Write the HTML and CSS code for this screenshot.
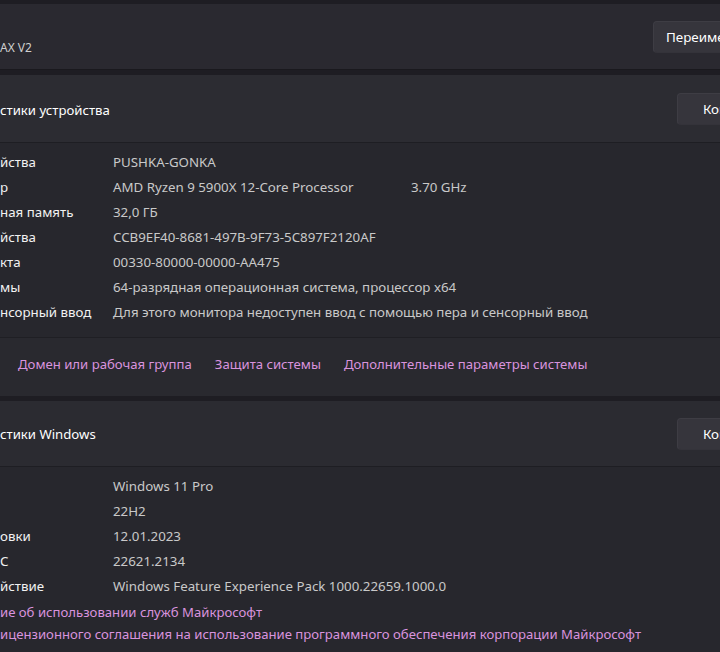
FILE: index.html
```html
<!DOCTYPE html>
<html lang="ru">
<head>
<meta charset="utf-8">
<title>О системе</title>
<link rel="stylesheet" href="styles.css">
</head>
<body>
<div class="page">
  <section class="card name-card">
    <div class="name-text">
      <div class="name-sub">AX V2</div>
    </div>
    <button class="btn btn-rename">Переименовать</button>
  </section>

  <section class="expander">
    <div class="exp-header">
      <span class="exp-title">стики устройства</span>
      <button class="btn btn-copy">Копировать</button>
    </div>
    <div class="exp-body">
      <dl class="specs">
        <dt>йства</dt><dd>PUSHKA-GONKA</dd>
        <dt class="cut">р</dt><dd><span class="cpu">AMD Ryzen 9 5900X 12-Core Processor</span>3.70 GHz</dd>
        <dt>ная память</dt><dd>32,0 ГБ</dd>
        <dt>йства</dt><dd>CCB9EF40-8681-497B-9F73-5C897F2120AF</dd>
        <dt>кта</dt><dd>00330-80000-00000-AA475</dd>
        <dt>мы</dt><dd>64-разрядная операционная система, процессор x64</dd>
        <dt>нсорный ввод</dt><dd>Для этого монитора недоступен ввод с помощью пера и сенсорный ввод</dd>
      </dl>
    </div>
    <div class="related">
      <a class="link" href="#">Домен или рабочая группа</a>
      <a class="link" href="#">Защита системы</a>
      <a class="link" href="#">Дополнительные параметры системы</a>
    </div>
  </section>

  <section class="expander">
    <div class="exp-header exp-header-win">
      <span class="exp-title exp-title-win">стики Windows</span>
      <button class="btn btn-copy">Копировать</button>
    </div>
    <div class="exp-body exp-body-win">
      <dl class="specs">
        <dt></dt><dd>Windows 11 Pro</dd>
        <dt></dt><dd>22H2</dd>
        <dt>овки</dt><dd>12.01.2023</dd>
        <dt>С</dt><dd>22621.2134</dd>
        <dt>йствие</dt><dd>Windows Feature Experience Pack 1000.22659.1000.0</dd>
      </dl>
      <div class="legal">
        <a class="link" href="#">ие об использовании служб Майкрософт</a>
        <a class="link" href="#">ицензионного соглашения на использование программного обеспечения корпорации Майкрософт</a>
      </div>
    </div>
  </section>
</div>
</body>
</html>
```

FILE: styles.css
```css
html, body {
  margin: 0;
  padding: 0;
  background: #1e1d23;
  overflow: hidden;
  height: 652px;
}

body {
  font-family: "Noto Sans", "Open Sans", sans-serif;
  font-size: 13.3px;
  color: #d0d0d0;
}

.page {
  width: 800px;
  padding-top: 4px;
  display: flex;
  flex-direction: column;
  gap: 5px;
}

.card {
  background: #2a2930;
  border-bottom: 1px solid #1a191e;
}

.name-card {
  height: 65px;
  display: flex;
  align-items: center;
  justify-content: space-between;
  padding-right: 16px;
}

.name-text {
  align-self: flex-start;
  padding-top: 36px;
}

.name-sub {
  font-size: 12px;
  line-height: 16px;
  color: #cfcfcf;
}

.btn {
  font-family: inherit;
  font-size: 13.4px;
  color: #ffffff;
  background: #36353c;
  border: 1px solid #3e3d44;
  border-bottom-color: #34333a;
  border-radius: 4px;
  height: 32px;
  padding: 0 12px;
  text-align: left;
  flex-shrink: 0;
}

.btn-rename { width: 131px; }
.btn-copy {
  width: 107px;
  padding-left: 25px;
}

.expander {
  display: flex;
  flex-direction: column;
}

.exp-header {
  height: 67px;
  background: #2c2c32;
  border-bottom: 1px solid #1e1e23;
  display: flex;
  align-items: center;
  justify-content: space-between;
  padding-right: 16px;
}

.exp-header-win {
  height: 65px;
  background: #2b2b31;
}

.exp-title {
  font-size: 13.2px;
  color: #ffffff;
  padding-top: 3px;
}

.exp-title-win {
  padding-top: 0;
}

.exp-body {
  background: #27272d;
  padding: 7px 0 12px;
  border-bottom: 1px solid #1f1f24;
}

.exp-body-win {
  border-bottom: none;
  padding-bottom: 20px;
}

.specs {
  margin: 0;
  display: grid;
  grid-template-columns: 113px 1fr;
  line-height: 25px;
}

.specs dt {
  color: #f2f2f2;
  white-space: nowrap;
  overflow: hidden;
}

.specs dd {
  margin: 0;
  color: #c9c9c9;
  white-space: nowrap;
}

.cpu {
  display: inline-block;
  width: 298px;
}

.related {
  height: 52px;
  background: #29292f;
  display: flex;
  align-items: center;
  gap: 23px;
  padding-left: 18px;
  padding-bottom: 6px;
}

.link {
  color: #d993de;
  text-decoration: none;
  font-size: 13.15px;
}

.legal {
  display: flex;
  flex-direction: column;
  line-height: 22px;
  padding-top: 2px;
}
```
